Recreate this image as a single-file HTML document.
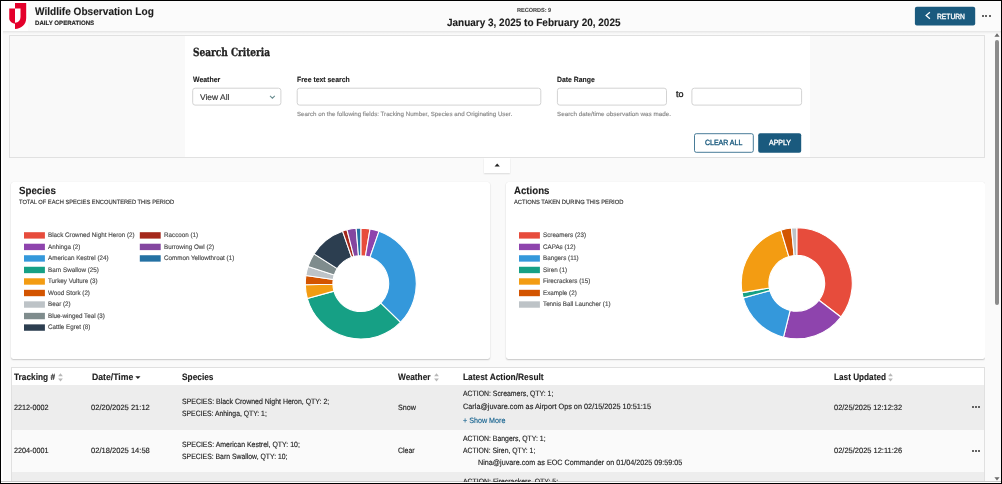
<!DOCTYPE html>
<html lang="en">
<head>
<meta charset="utf-8">
<title>Wildlife Observation Log</title>
<style>
*{box-sizing:border-box;margin:0;padding:0}
html,body{width:1002px;height:484px;overflow:hidden;background:#000}
body{font-family:"Liberation Sans",sans-serif;color:#222;position:relative;text-rendering:geometricPrecision}
.a{position:absolute}
.t{position:absolute;white-space:nowrap;line-height:1;transform-origin:0 0;}
.t{-webkit-text-stroke:.12px}
.r{-webkit-text-stroke:.15px}
.s{-webkit-text-stroke:.3px}
.m{-webkit-text-stroke:.34px}
#app{position:absolute;left:1px;top:1px;width:1000px;height:482px;background:#fafafa;overflow:hidden}
#hdr{left:0;top:0;width:1000px;height:29.7px;background:#fbfbfb}
.dots{width:9px;height:2.2px}
.dots i{position:absolute;top:0;width:2.1px;height:2.2px;background:#484848;border-radius:.7px}
#panel{left:8px;top:34px;width:975.7px;height:122.8px;background:#f9f9f9;border:1px solid #e1e1e1}
#pin{left:184px;top:35px;width:625px;height:120.8px;background:#fff}
.card{top:181px;height:176.6px;width:479.2px;background:#fff;border-radius:2.5px;box-shadow:0 1px 1.5px rgba(0,0,0,.2),0 0 1px rgba(0,0,0,.1)}
#tbl{left:10px;top:366.3px;width:974px;height:130px;background:#fafafa;border:1px solid #e0e0e0}
.row{position:absolute;left:11px;width:972px}
</style>
</head>
<body>
<div id="app">
<div class="a" style="left:2.3px;top:29.7px;width:998px;height:3.6px;background:linear-gradient(#e4e4e4,#efefef 45%,#fafafa)"></div>
<div class="a" style="left:0;top:29px;width:2.3px;height:453px;background:#fff"></div>
<div class="a" id="hdr"></div>
<div class="a" style="left:0;top:0;width:26.5px;height:29.7px;background:#fff"></div>
<svg class="a" style="left:7px;top:1px" width="20" height="30" viewBox="0 0 20 30">
<path fill="#e4002b" d="M7 1H18.2V16C18.2 22.5 13.5 26.6 7 27V20.8C10.5 20.3 12.5 18.3 12.5 15V6.5H7Z"/>
<path fill="#e4002b" d="M1.25 6.5H7V21.75C3.5 21.2 1.25 19 1.25 16.5Z"/>
</svg>
<svg class="a" style="left:0;top:0" width="1000" height="30" viewBox="1 1 1000 30"><rect x="914.9" y="6.8" width="60.3" height="18.6" rx="2" fill="#1a5a7e"/></svg>
<svg class="a" style="left:923px;top:10.2px" width="8" height="10" viewBox="0 0 8 10"><path d="M5.9 1.2L2.1 4.5L5.9 7.8" fill="none" stroke="#fff" stroke-width="1.25"/></svg>
<div class="a dots" style="left:981px;top:13.5px"><i style="left:0"></i><i style="left:3.3px"></i><i style="left:6.6px"></i></div>

<div class="a" id="panel"></div>
<div class="a" id="pin"></div>
<svg class="a" style="left:0;top:0" width="1000" height="482" viewBox="1 1 1000 482">
<g fill="#fff" stroke="#d3d3d3" stroke-width="1">
<rect x="192.7" y="88.2" width="88.2" height="16.9" rx="2.4"/>
<rect x="297.2" y="88.2" width="243.6" height="16.9" rx="2.4"/>
<rect x="557.4" y="88.2" width="109.1" height="16.9" rx="2.4"/>
<rect x="691.9" y="88.2" width="109.7" height="16.9" rx="2.4"/>
</g>
<rect x="694.5" y="133.7" width="58.8" height="18.6" rx="1.8" fill="#fff" stroke="#1a5a7e" stroke-width=".8"/>
<rect x="758.2" y="133.2" width="43" height="19.6" rx="2" fill="#1a5a7e"/>
</svg>
<svg class="a" style="left:267.6px;top:93.8px" width="7" height="5" viewBox="0 0 7 5"><path d="M1 .9L3.4 3.2L5.8 .9" fill="none" stroke="#6a8d90" stroke-width="1.05"/></svg>

<div class="a" style="left:483.3px;top:156.6px;width:26px;height:15.5px;background:#fff;box-shadow:0 1px 1.5px rgba(0,0,0,.12)"></div>
<svg class="a" style="left:493px;top:162.1px" width="7" height="4" viewBox="0 0 7 4"><path d="M.6 3.4L3.2 .5L5.8 3.4Z" fill="#222"/></svg>

<div class="a card" style="left:10.3px"></div>
<div class="a card" style="left:505.2px"></div>
<svg class="a" style="left:0;top:0" width="1000" height="482" viewBox="0 0 1000 482">
<rect x="23.00" y="231.20" width="20.9" height="6.4" fill="#e74c3c"/>
<rect x="23.00" y="242.72" width="20.9" height="6.4" fill="#8e44ad"/>
<rect x="23.00" y="254.24" width="20.9" height="6.4" fill="#3498db"/>
<rect x="23.00" y="265.76" width="20.9" height="6.4" fill="#16a085"/>
<rect x="23.00" y="277.28" width="20.9" height="6.4" fill="#f39c12"/>
<rect x="23.00" y="288.80" width="20.9" height="6.4" fill="#d35400"/>
<rect x="23.00" y="300.32" width="20.9" height="6.4" fill="#bdc3c7"/>
<rect x="23.00" y="311.84" width="20.9" height="6.4" fill="#7f8c8d"/>
<rect x="23.00" y="323.36" width="20.9" height="6.4" fill="#2c3e50"/>
<rect x="138.80" y="231.20" width="20.9" height="6.4" fill="#a5281b"/>
<rect x="138.80" y="242.72" width="20.9" height="6.4" fill="#8446a0"/>
<rect x="138.80" y="254.24" width="20.9" height="6.4" fill="#2471a3"/>
<rect x="518.00" y="231.20" width="20.9" height="6.4" fill="#e74c3c"/>
<rect x="518.00" y="242.72" width="20.9" height="6.4" fill="#8e44ad"/>
<rect x="518.00" y="254.24" width="20.9" height="6.4" fill="#3498db"/>
<rect x="518.00" y="265.76" width="20.9" height="6.4" fill="#16a085"/>
<rect x="518.00" y="277.28" width="20.9" height="6.4" fill="#f39c12"/>
<rect x="518.00" y="288.80" width="20.9" height="6.4" fill="#d35400"/>
<rect x="518.00" y="300.32" width="20.9" height="6.4" fill="#bdc3c7"/>
<g stroke="#fff" stroke-width="1.1" stroke-linejoin="round">
<path d="M359.80 227.10A55.5 55.5 0 0 1 369.06 227.88L364.45 255.09A27.9 27.9 0 0 0 359.80 254.70Z" fill="#e74c3c"/>
<path d="M369.06 227.88A55.5 55.5 0 0 1 378.05 230.19L368.98 256.25A27.9 27.9 0 0 0 364.45 255.09Z" fill="#8e44ad"/>
<path d="M378.05 230.19A55.5 55.5 0 0 1 399.45 321.43L379.73 302.12A27.9 27.9 0 0 0 368.98 256.25Z" fill="#3498db"/>
<path d="M399.45 321.43A55.5 55.5 0 0 1 306.34 297.53L332.93 290.10A27.9 27.9 0 0 0 379.73 302.12Z" fill="#16a085"/>
<path d="M306.34 297.53A55.5 55.5 0 0 1 304.31 283.76L331.91 283.18A27.9 27.9 0 0 0 332.93 290.10Z" fill="#f39c12"/>
<path d="M304.31 283.76A55.5 55.5 0 0 1 304.90 274.49L332.20 278.52A27.9 27.9 0 0 0 331.91 283.18Z" fill="#d35400"/>
<path d="M304.90 274.49A55.5 55.5 0 0 1 307.02 265.45L333.27 273.98A27.9 27.9 0 0 0 332.20 278.52Z" fill="#bdc3c7"/>
<path d="M307.02 265.45A55.5 55.5 0 0 1 312.94 252.86L336.24 267.65A27.9 27.9 0 0 0 333.27 273.98Z" fill="#7f8c8d"/>
<path d="M312.94 252.86A55.5 55.5 0 0 1 341.55 230.19L350.62 256.25A27.9 27.9 0 0 0 336.24 267.65Z" fill="#2c3e50"/>
<path d="M341.55 230.19A55.5 55.5 0 0 1 346.00 228.84L352.86 255.58A27.9 27.9 0 0 0 350.62 256.25Z" fill="#a5281b"/>
<path d="M346.00 228.84A55.5 55.5 0 0 1 355.16 227.29L357.47 254.80A27.9 27.9 0 0 0 352.86 255.58Z" fill="#8446a0"/>
<path d="M355.16 227.29A55.5 55.5 0 0 1 359.80 227.10L359.80 254.70A27.9 27.9 0 0 0 357.47 254.80Z" fill="#2471a3"/>
<path d="M795.80 226.80A55.5 55.5 0 0 1 839.90 316.00L817.97 299.24A27.9 27.9 0 0 0 795.80 254.40Z" fill="#e74c3c"/>
<path d="M839.90 316.00A55.5 55.5 0 0 1 782.52 336.19L789.12 309.39A27.9 27.9 0 0 0 817.97 299.24Z" fill="#8e44ad"/>
<path d="M782.52 336.19A55.5 55.5 0 0 1 742.25 296.88L768.88 289.63A27.9 27.9 0 0 0 789.12 309.39Z" fill="#3498db"/>
<path d="M742.25 296.88A55.5 55.5 0 0 1 741.09 291.64L768.30 287.00A27.9 27.9 0 0 0 768.88 289.63Z" fill="#16a085"/>
<path d="M741.09 291.64A55.5 55.5 0 0 1 779.93 229.12L787.82 255.56A27.9 27.9 0 0 0 768.30 287.00Z" fill="#f39c12"/>
<path d="M779.93 229.12A55.5 55.5 0 0 1 790.44 227.06L793.11 254.53A27.9 27.9 0 0 0 787.82 255.56Z" fill="#d35400"/>
<path d="M790.44 227.06A55.5 55.5 0 0 1 795.80 226.80L795.80 254.40A27.9 27.9 0 0 0 793.11 254.53Z" fill="#bdc3c7"/>
</g>
</svg>

<div class="a" id="tbl"></div>
<div class="row" style="top:367.3px;height:17px;background:#fff"></div>
<div class="row" style="top:384.2px;height:44.9px;background:#ededed"></div>
<div class="row" style="top:429.1px;height:41.9px;background:#fafafa"></div>
<div class="row" style="top:471px;height:12px;background:#ededed"></div>
<!-- sort icons -->
<svg class="a" style="left:57.3px;top:371.7px" width="5" height="9" viewBox="0 0 5 9"><path d="M.1 3.2L2.5 .2L4.9 3.2ZM.1 5.4L2.5 8.4L4.9 5.4Z" fill="#b8b8b8"/></svg>
<svg class="a" style="left:432.9px;top:371.7px" width="5" height="9" viewBox="0 0 5 9"><path d="M.1 3.2L2.5 .2L4.9 3.2ZM.1 5.4L2.5 8.4L4.9 5.4Z" fill="#b8b8b8"/></svg>
<svg class="a" style="left:887.4px;top:371.7px" width="5" height="9" viewBox="0 0 5 9"><path d="M.1 3.2L2.5 .2L4.9 3.2ZM.1 5.4L2.5 8.4L4.9 5.4Z" fill="#b8b8b8"/></svg>
<svg class="a" style="left:134px;top:375.4px" width="6" height="4" viewBox="0 0 6 4"><path d="M.3 .3L2.9 3L5.5 .3Z" fill="#222"/></svg>
<div class="a dots" style="left:970.6px;top:405.3px"><i style="left:0"></i><i style="left:3.2px"></i><i style="left:6.4px"></i></div>
<div class="a dots" style="left:970.6px;top:448.8px"><i style="left:0"></i><i style="left:3.2px"></i><i style="left:6.4px"></i></div>

<div class="a" style="left:0;top:479.6px;width:1000px;height:1.2px;background:#c9c9c9"></div>
<div class="a" style="left:0;top:480.8px;width:1000px;height:1.2px;background:#fff"></div>
<div class="a" style="left:0;top:0;width:1000px;height:481px;overflow:hidden;will-change:transform">
<div class="t" style="left:33.50px;top:6.02px;font-size:10.8px;color:#1c1c1c;font-weight:bold;transform:scaleX(0.9349);">Wildlife Observation Log</div>
<div class="t" style="left:33.50px;top:20.02px;font-size:6.3px;color:#222;font-weight:bold;transform:scaleX(0.9685);">DAILY OPERATIONS</div>
<div class="t" style="left:516.00px;top:8.02px;font-size:5.9px;color:#4a4a4a;font-weight:bold;transform:scaleX(0.9410);">RECORDS: 9</div>
<div class="t" style="left:446.20px;top:17.02px;font-size:10.6px;color:#1c1c1c;font-weight:bold;transform:scaleX(0.9413);">January 3, 2025 to February 20, 2025</div>
<div class="t m" style="left:935.90px;top:12.02px;font-size:7.5px;color:#fff;transform:scaleX(0.8928);">RETURN</div>
<div class="t s" style="left:191.60px;top:46.02px;font-size:11.2px;color:#222;font-weight:bold;font-family:'DejaVu Serif Condensed','DejaVu Serif','Liberation Serif',serif;transform:scaleX(0.8923);">Search Criteria</div>
<div class="t" style="left:191.60px;top:75.02px;font-size:7.5px;color:#222;font-weight:bold;transform:scaleX(0.9230);">Weather</div>
<div class="t" style="left:295.70px;top:75.02px;font-size:7.5px;color:#222;font-weight:bold;transform:scaleX(0.9158);">Free text search</div>
<div class="t" style="left:555.90px;top:75.02px;font-size:7.5px;color:#222;font-weight:bold;transform:scaleX(0.9136);">Date Range</div>
<div class="t r" style="left:198.60px;top:92.02px;font-size:8.3px;color:#333;transform:scaleX(1.0171);">View All</div>
<div class="t m" style="left:674.60px;top:89.02px;font-size:9px;color:#222;transform:scaleX(0.9979);">to</div>
<div class="t r" style="left:295.70px;top:111.02px;font-size:6.1px;color:#8a8a8a;transform:scaleX(1.0121);">Search on the following fields: Tracking Number, Species and Originating User.</div>
<div class="t r" style="left:555.90px;top:111.02px;font-size:6.1px;color:#8a8a8a;transform:scaleX(1.0323);">Search date/time observation was made.</div>
<div class="t m" style="left:704.10px;top:138.02px;font-size:7.5px;color:#1a5a7e;transform:scaleX(0.9318);">CLEAR ALL</div>
<div class="t m" style="left:767.70px;top:138.02px;font-size:7.5px;color:#fff;transform:scaleX(0.9312);">APPLY</div>
<div class="t" style="left:18.00px;top:186.02px;font-size:10.4px;color:#1c1c1c;font-weight:bold;transform:scaleX(0.9368);">Species</div>
<div class="t r" style="left:18.00px;top:199.02px;font-size:6.1px;color:#333;transform:scaleX(0.9405);">TOTAL OF EACH SPECIES ENCOUNTERED THIS PERIOD</div>
<div class="t" style="left:513.00px;top:186.02px;font-size:10.4px;color:#1c1c1c;font-weight:bold;transform:scaleX(0.9289);">Actions</div>
<div class="t r" style="left:513.00px;top:199.02px;font-size:6.1px;color:#333;transform:scaleX(0.9531);">ACTIONS TAKEN DURING THIS PERIOD</div>
<div class="t r" style="left:47.10px;top:232.02px;font-size:6.6px;color:#4a4a4a;transform:scaleX(0.9489);">Black Crowned Night Heron (2)</div>
<div class="t r" style="left:47.10px;top:244.02px;font-size:6.6px;color:#4a4a4a;transform:scaleX(0.9489);">Anhinga (2)</div>
<div class="t r" style="left:47.10px;top:255.02px;font-size:6.6px;color:#4a4a4a;transform:scaleX(0.9489);">American Kestrel (24)</div>
<div class="t r" style="left:47.10px;top:267.02px;font-size:6.6px;color:#4a4a4a;transform:scaleX(0.9489);">Barn Swallow (25)</div>
<div class="t r" style="left:47.10px;top:278.02px;font-size:6.6px;color:#4a4a4a;transform:scaleX(0.9489);">Turkey Vulture (3)</div>
<div class="t r" style="left:47.10px;top:290.02px;font-size:6.6px;color:#4a4a4a;transform:scaleX(0.9489);">Wood Stork (2)</div>
<div class="t r" style="left:47.10px;top:301.02px;font-size:6.6px;color:#4a4a4a;transform:scaleX(0.9489);">Bear (2)</div>
<div class="t r" style="left:47.10px;top:313.02px;font-size:6.6px;color:#4a4a4a;transform:scaleX(0.9489);">Blue-winged Teal (3)</div>
<div class="t r" style="left:47.10px;top:324.02px;font-size:6.6px;color:#4a4a4a;transform:scaleX(0.9489);">Cattle Egret (8)</div>
<div class="t r" style="left:162.90px;top:232.02px;font-size:6.6px;color:#4a4a4a;transform:scaleX(0.9489);">Raccoon (1)</div>
<div class="t r" style="left:162.90px;top:244.02px;font-size:6.6px;color:#4a4a4a;transform:scaleX(0.9489);">Burrowing Owl (2)</div>
<div class="t r" style="left:162.90px;top:255.02px;font-size:6.6px;color:#4a4a4a;transform:scaleX(0.9489);">Common Yellowthroat (1)</div>
<div class="t r" style="left:542.10px;top:232.02px;font-size:6.6px;color:#4a4a4a;transform:scaleX(0.9489);">Screamers (23)</div>
<div class="t r" style="left:542.10px;top:244.02px;font-size:6.6px;color:#4a4a4a;transform:scaleX(0.9489);">CAPAs (12)</div>
<div class="t r" style="left:542.10px;top:255.02px;font-size:6.6px;color:#4a4a4a;transform:scaleX(0.9489);">Bangers (11)</div>
<div class="t r" style="left:542.10px;top:267.02px;font-size:6.6px;color:#4a4a4a;transform:scaleX(0.9489);">Siren (1)</div>
<div class="t r" style="left:542.10px;top:278.02px;font-size:6.6px;color:#4a4a4a;transform:scaleX(0.9489);">Firecrackers (15)</div>
<div class="t r" style="left:542.10px;top:290.02px;font-size:6.6px;color:#4a4a4a;transform:scaleX(0.9489);">Example (2)</div>
<div class="t r" style="left:542.10px;top:301.02px;font-size:6.6px;color:#4a4a4a;transform:scaleX(0.9489);">Tennis Ball Launcher (1)</div>
<div class="t" style="left:13.30px;top:372.02px;font-size:9.2px;color:#222;font-weight:bold;transform:scaleX(0.9020);">Tracking #</div>
<div class="t" style="left:90.60px;top:372.02px;font-size:9.2px;color:#222;font-weight:bold;transform:scaleX(0.9440);">Date/Time</div>
<div class="t" style="left:180.90px;top:372.02px;font-size:9.2px;color:#222;font-weight:bold;transform:scaleX(0.9069);">Species</div>
<div class="t" style="left:397.40px;top:372.02px;font-size:9.2px;color:#222;font-weight:bold;transform:scaleX(0.9004);">Weather</div>
<div class="t" style="left:462.00px;top:372.02px;font-size:9.2px;color:#222;font-weight:bold;transform:scaleX(0.9109);">Latest Action/Result</div>
<div class="t" style="left:833.00px;top:372.02px;font-size:9.2px;color:#222;font-weight:bold;transform:scaleX(0.8934);">Last Updated</div>
<div class="t r" style="left:13.00px;top:403.02px;font-size:7.7px;color:#222;transform:scaleX(0.9411);">2212-0002</div>
<div class="t r" style="left:90.20px;top:403.02px;font-size:7.7px;color:#222;transform:scaleX(0.9823);">02/20/2025 21:12</div>
<div class="t r" style="left:180.80px;top:397.02px;font-size:7.7px;color:#222;transform:scaleX(0.9048);">SPECIES: Black Crowned Night Heron, QTY: 2;</div>
<div class="t r" style="left:180.80px;top:409.02px;font-size:7.7px;color:#222;transform:scaleX(0.8859);">SPECIES: Anhinga, QTY: 1;</div>
<div class="t r" style="left:397.40px;top:403.02px;font-size:7.7px;color:#222;transform:scaleX(0.9358);">Snow</div>
<div class="t r" style="left:461.90px;top:389.02px;font-size:7.7px;color:#222;transform:scaleX(0.8957);">ACTION: Screamers, QTY: 1;</div>
<div class="t r" style="left:461.90px;top:402.02px;font-size:7.7px;color:#222;transform:scaleX(0.9496);">Carla@juvare.com as Airport Ops on 02/15/2025 10:51:15</div>
<div class="t r" style="left:461.90px;top:416.02px;font-size:7.7px;color:#1a6590;transform:scaleX(0.9315);">+ Show More</div>
<div class="t r" style="left:833.00px;top:403.02px;font-size:7.7px;color:#222;transform:scaleX(0.9653);">02/25/2025 12:12:32</div>
<div class="t r" style="left:13.00px;top:446.02px;font-size:7.7px;color:#222;transform:scaleX(0.9411);">2204-0001</div>
<div class="t r" style="left:90.20px;top:446.02px;font-size:7.7px;color:#222;transform:scaleX(0.9823);">02/18/2025 14:58</div>
<div class="t r" style="left:180.80px;top:440.02px;font-size:7.7px;color:#222;transform:scaleX(0.9047);">SPECIES: American Kestrel, QTY: 10;</div>
<div class="t r" style="left:180.80px;top:452.02px;font-size:7.7px;color:#222;transform:scaleX(0.8914);">SPECIES: Barn Swallow, QTY: 10;</div>
<div class="t r" style="left:397.40px;top:446.02px;font-size:7.7px;color:#222;transform:scaleX(0.9088);">Clear</div>
<div class="t r" style="left:461.90px;top:434.02px;font-size:7.7px;color:#222;transform:scaleX(0.8951);">ACTION: Bangers, QTY: 1;</div>
<div class="t r" style="left:461.90px;top:446.02px;font-size:7.7px;color:#222;transform:scaleX(0.8861);">ACTION: Siren, QTY: 1;</div>
<div class="t r" style="left:476.80px;top:458.02px;font-size:7.7px;color:#222;transform:scaleX(0.9369);">Nina@juvare.com as EOC Commander on 01/04/2025 09:59:05</div>
<div class="t r" style="left:833.00px;top:446.02px;font-size:7.7px;color:#222;transform:scaleX(0.9733);">02/25/2025 12:11:26</div>
<div class="t r" style="left:461.90px;top:477.02px;font-size:7.7px;color:#222;transform:scaleX(0.8977);">ACTION: Firecrackers, QTY: 5;</div>
</div>

<!-- scrollbar -->
<div class="a" style="left:984.4px;top:33px;width:15.6px;height:446.6px;background:#fafafa"></div>
<div class="a" style="left:993.7px;top:39px;width:4.6px;height:265.4px;background:#8b8b8b;border-radius:2.3px"></div>
<svg class="a" style="left:993px;top:32px" width="6" height="4" viewBox="0 0 6 4"><path d="M.4 3.8L3 .3L5.6 3.8Z" fill="#6a6a6a"/></svg>
<svg class="a" style="left:993px;top:476.2px" width="6" height="4" viewBox="0 0 6 4"><path d="M.4 .2L3 3.6L5.6 .2Z" fill="#6a6a6a"/></svg>
</div>
</body>
</html>
